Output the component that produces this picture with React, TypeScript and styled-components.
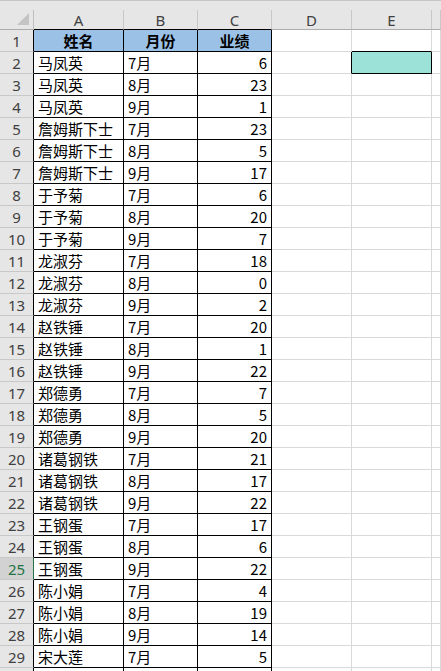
import React from "react";
import styled, { createGlobalStyle } from "styled-components";

const Global = createGlobalStyle`
  html, body { margin: 0; padding: 0; background: #ffffff; overflow: hidden; }
  body { font-family: "Noto Sans CJK SC", "Noto Sans", sans-serif; }
`;

const COLS = [34, 90, 74, 74, 80, 80, 9];
const GRID = "#d9d9d9";
const BLACK = "#000000";

const Sheet = styled.div`
  width: 441px;
  height: 671px;
  overflow: hidden;
  background: #ffffff;
  display: flex;
  flex-direction: column;
`;

const TopStrip = styled.div`
  height: 10px;
  flex: none;
  background: #e6e6e6;
  border-top: 1px solid #c6c6c6;
  box-sizing: border-box;
`;

const Grid = styled.div`
  display: grid;
  grid-template-columns: ${COLS.map((c) => c + "px").join(" ")};
  grid-template-rows: 20px;
  grid-auto-rows: 22px;
`;

const Corner = styled.div`
  background: #e6e6e6;
  border-right: 1px solid #bfbfbf;
  border-bottom: 1px solid #ababab;
  box-sizing: border-box;
  position: relative;
  &::after {
    content: "";
    position: absolute;
    right: 4px;
    bottom: 4px;
    width: 0;
    height: 0;
    border-left: 12px solid transparent;
    border-bottom: 12px solid #c4c4c4;
  }
`;

const ColHead = styled.div<{ $bb: string }>`
  background: #e6e6e6;
  border-right: 1px solid #c8c8c8;
  border-bottom: 1px solid ${(p) => p.$bb};
  box-sizing: border-box;
  display: flex;
  align-items: center;
  justify-content: center;
  font-family: "Noto Sans", "Liberation Sans", sans-serif;
  font-size: 15px;
  color: #404040;
  padding-top: 1px;
`;

const RowHead = styled.div<{ $sel?: boolean }>`
  background: ${(p) => (p.$sel ? "#d2d2d2" : "#e6e6e6")};
  border-right: 1px solid ${(p) => (p.$sel ? "#217346" : BLACK)};
  border-bottom: 1px solid #c8c8c8;
  box-sizing: border-box;
  display: flex;
  align-items: center;
  justify-content: center;
  font-family: "Noto Sans", "Liberation Sans", sans-serif;
  font-size: 15px;
  color: ${(p) => (p.$sel ? "#217346" : "#404040")};
`;

const Cell = styled.div<{
  $rb: string;
  $bb: string;
  $bg: string;
  $align: "left" | "right" | "center";
  $bold?: boolean;
}>`
  background: ${(p) => p.$bg};
  border-right: 1px solid ${(p) => p.$rb};
  border-bottom: 1px solid ${(p) => p.$bb};
  box-sizing: border-box;
  display: flex;
  align-items: center;
  justify-content: ${(p) =>
    p.$align === "right" ? "flex-end" : p.$align === "center" ? "center" : "flex-start"};
  padding: 0 4px 0 4px;
  font-family: "Noto Sans CJK SC", "Noto Sans", sans-serif;
  font-size: 15px;
  font-weight: ${(p) => (p.$bold ? 700 : 400)};
  color: #000000;
  white-space: nowrap;
  overflow: hidden;
`;

const data: [string, string, number][] = [
  ["马凤英", "7月", 6],
  ["马凤英", "8月", 23],
  ["马凤英", "9月", 1],
  ["詹姆斯下士", "7月", 23],
  ["詹姆斯下士", "8月", 5],
  ["詹姆斯下士", "9月", 17],
  ["于予菊", "7月", 6],
  ["于予菊", "8月", 20],
  ["于予菊", "9月", 7],
  ["龙淑芬", "7月", 18],
  ["龙淑芬", "8月", 0],
  ["龙淑芬", "9月", 2],
  ["赵铁锤", "7月", 20],
  ["赵铁锤", "8月", 1],
  ["赵铁锤", "9月", 22],
  ["郑德勇", "7月", 7],
  ["郑德勇", "8月", 5],
  ["郑德勇", "9月", 20],
  ["诸葛钢铁", "7月", 21],
  ["诸葛钢铁", "8月", 17],
  ["诸葛钢铁", "9月", 22],
  ["王钢蛋", "7月", 17],
  ["王钢蛋", "8月", 6],
  ["王钢蛋", "9月", 22],
  ["陈小娟", "7月", 4],
  ["陈小娟", "8月", 19],
  ["陈小娟", "9月", 14],
  ["宋大莲", "7月", 5],
];

const HEADER_BG = "#9bc2e6";
const TEAL = "#9de2d8";

export default function App() {
  const letters = ["A", "B", "C", "D", "E", ""];
  const rows: React.ReactNode[] = [];
  const headerVals = ["姓名", "月份", "业绩"];

  for (let r = 1; r <= 30; r++) {
    rows.push(
      <RowHead key={`rh${r}`} $sel={r === 25}>
        {r <= 29 ? r : ""}
      </RowHead>
    );
    for (let c = 0; c < 6; c++) {
      const inTable = c < 3;
      let text: React.ReactNode = "";
      let align: "left" | "right" | "center" = "left";
      let bold = false;
      let bg = "#ffffff";
      let rb = GRID;
      let bb = GRID;
      if (inTable) {
        rb = BLACK;
        bb = BLACK;
        if (r === 1) {
          text = headerVals[c];
          align = "center";
          bold = true;
          bg = HEADER_BG;
        } else if (r - 2 < data.length) {
          const d = data[r - 2];
          text = d[c];
          align = c === 2 ? "right" : "left";
        }
      }
      if (c === 4 && r === 2) {
        bg = TEAL;
        rb = BLACK;
        bb = BLACK;
      }
      if (c === 4 && r === 1) bb = BLACK;
      if (c === 3 && r === 2) rb = BLACK;
      rows.push(
        <Cell
          key={`c${r}-${c}`}
          $rb={rb}
          $bb={bb}
          $bg={bg}
          $align={align}
          $bold={bold}
        >
          {text}
        </Cell>
      );
    }
  }

  return (
    <>
      <Global />
      <Sheet>
        <TopStrip />
        <Grid>
          <Corner />
          {letters.map((l, i) => (
            <ColHead key={`ch${i}`} $bb={i < 3 ? BLACK : "#ababab"}>
              {l}
            </ColHead>
          ))}
          {rows}
        </Grid>
      </Sheet>
    </>
  );
}
